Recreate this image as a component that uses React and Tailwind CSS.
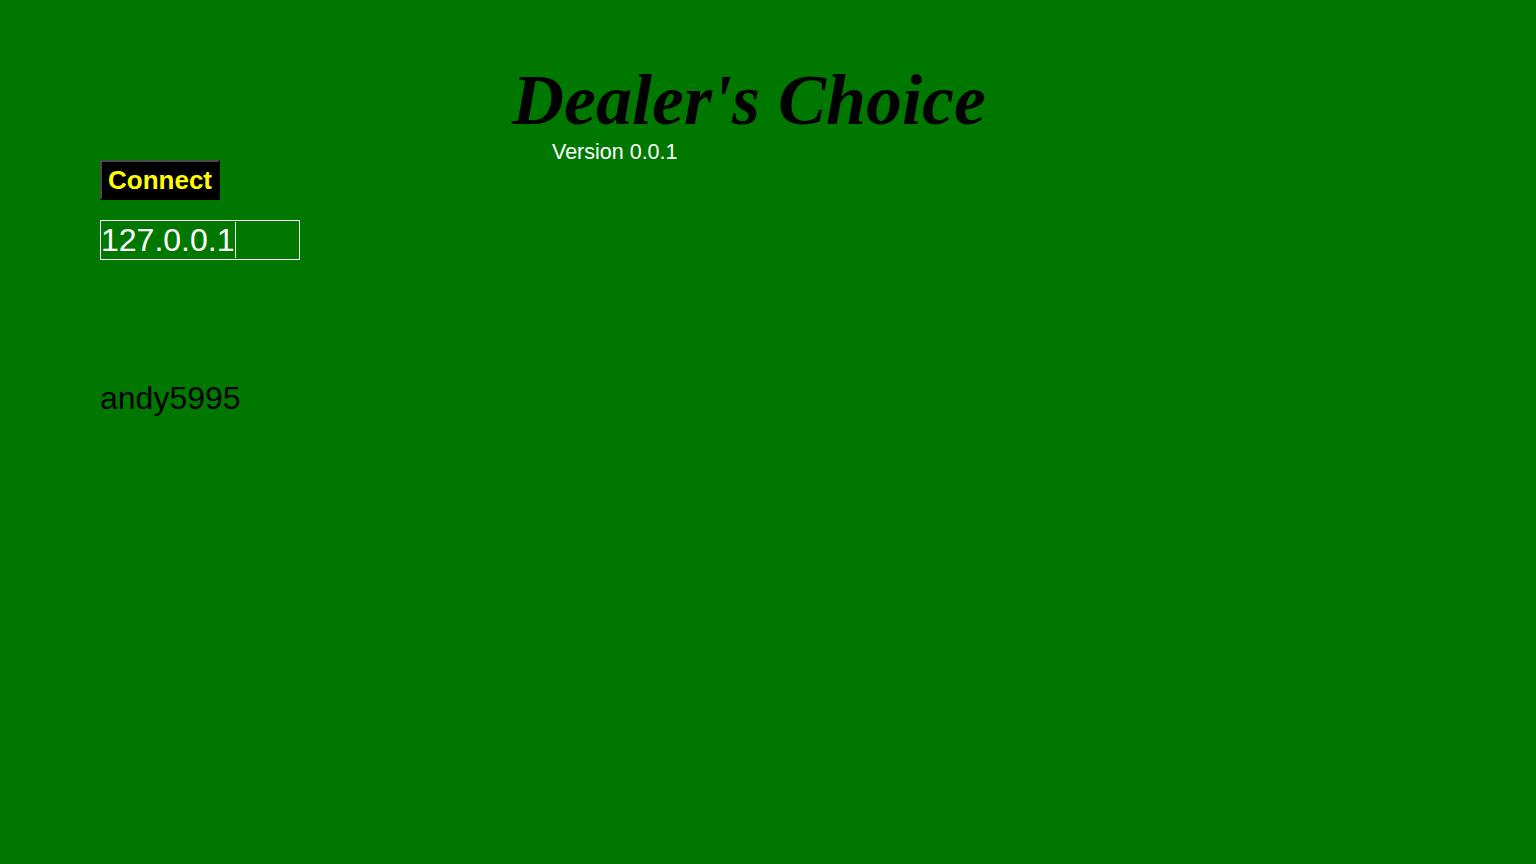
import React from 'react';

const App = () => {
  return (
    <div className="min-h-screen w-full bg-[#007800] font-['Liberation_Sans',Arial,sans-serif]">
      <div className="h-[160px] pt-[64px]">
        <h1 className="pl-[512px] text-[72px] leading-[72px] font-bold italic text-black font-['Liberation_Serif','Times_New_Roman',serif]">
          Dealer's Choice
        </h1>
        <div className="mt-[9px] pl-[552px] text-[21.5px] leading-[15px] text-white">Version 0.0.1</div>
      </div>

      <div className="flex flex-col items-start pl-[100px]">
        <button className="h-[40px] w-[120px] bg-black text-[26px] font-bold leading-none text-[#ffff00] border-2 border-t-[#4a4a4a] border-l-[#4a4a4a] border-r-black border-b-black">
          Connect
        </button>

        <div className="relative mt-[20px] h-[40px] w-[200px] border border-white">
          <input
            readOnly
            value="127.0.0.1"
            className="h-full w-full bg-transparent p-0 text-[32px] leading-none text-white outline-none"
          />
          <span className="absolute left-[134px] top-[1px] h-[36px] w-px bg-white" />
        </div>

        <div className="mt-[118px] text-[32px] leading-[40px] text-black">andy5995</div>
      </div>
    </div>
  );
};

export default App;
